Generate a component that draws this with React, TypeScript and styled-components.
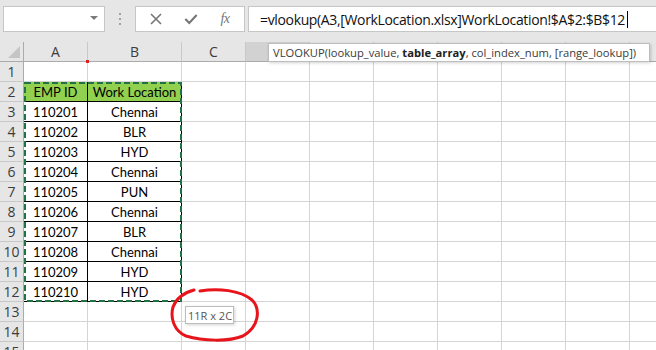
import React from 'react'
import styled, { createGlobalStyle } from 'styled-components'

const GlobalStyle = createGlobalStyle`
  html, body {
    margin: 0;
    padding: 0;
    background: #ffffff;
    overflow: hidden;
  }
  * {
    box-sizing: border-box;
  }
`

const uiFont = `"Open Sans", "Noto Sans", sans-serif`
const cellFont = `Lato, "Noto Sans", sans-serif`

// letters of D onwards sit under the syntax tooltip, so they are not drawn
const columns = [
  { key: 'A', width: 64, label: 'A' },
  { key: 'B', width: 94, label: 'B' },
  { key: 'C', width: 64, label: 'C' },
  { key: 'D', width: 64, label: '', hot: true },
  { key: 'E', width: 64, label: '' },
  { key: 'F', width: 64, label: '' },
  { key: 'G', width: 64, label: '' },
  { key: 'H', width: 64, label: '' },
  { key: 'I', width: 64, label: '' },
  { key: 'J', width: 64, label: '' },
]

const data = [
  ['110201', 'Chennai'],
  ['110202', 'BLR'],
  ['110203', 'HYD'],
  ['110204', 'Chennai'],
  ['110205', 'PUN'],
  ['110206', 'Chennai'],
  ['110207', 'BLR'],
  ['110208', 'Chennai'],
  ['110209', 'HYD'],
  ['110210', 'HYD'],
]

const Page = styled.div`
  position: relative;
  width: 656px;
  height: 350px;
  overflow: hidden;
  background: #ffffff;
`

const FormulaBar = styled.div`
  height: 42px;
  background: #e6e6e6;
  display: flex;
  align-items: flex-start;
  padding-top: 6px;
  padding-left: 3px;
`

const NameBox = styled.div`
  width: 102px;
  height: 26px;
  background: #ffffff;
  border: 1px solid #c6c6c6;
  display: flex;
  align-items: center;
  justify-content: flex-end;
  padding-right: 6px;
`

const Caret = styled.div`
  width: 0;
  height: 0;
  border-left: 4px solid transparent;
  border-right: 4px solid transparent;
  border-top: 4px solid #7a7a7a;
  margin-top: -2px;
`

const Grip = styled.div`
  width: 30px;
  height: 26px;
  display: flex;
  flex-direction: column;
  align-items: center;
  justify-content: center;
  gap: 3px;
`

const GripDot = styled.span`
  width: 2px;
  height: 2px;
  background: #a0a0a0;
`

const ButtonGroup = styled.div`
  width: 110px;
  height: 26px;
  background: #ffffff;
  border: 1px solid #c6c6c6;
  display: flex;
  align-items: center;
  justify-content: space-between;
  padding: 0 12px 0 13px;
`

const IconButton = styled.span`
  width: 14px;
  height: 14px;
  display: flex;
  align-items: center;
  justify-content: center;
  color: #767676;
`

const Fx = styled.span`
  font-family: "Liberation Serif", "DejaVu Serif", serif;
  font-style: italic;
  font-size: 14px;
  color: #767676;
  letter-spacing: -0.5px;
  line-height: 1;
`

const FormulaInput = styled.div`
  flex: 1;
  margin-left: 3px;
  margin-right: -4px;
  height: 26px;
  background: #ffffff;
  border: 1px solid #c6c6c6;
  display: flex;
  align-items: center;
  padding-left: 11px;
  font-family: ${uiFont};
  font-size: 14px;
  letter-spacing: -0.35px;
  color: #111111;
  white-space: nowrap;
`

const TextCursor = styled.span`
  display: inline-block;
  width: 1px;
  height: 17px;
  background: #000000;
  margin-left: 2px;
`

const Sheet = styled.div`
  display: flex;
  flex-direction: column;
`

const Row = styled.div`
  display: flex;
  height: 20px;
`

const Corner = styled.div`
  position: relative;
  width: 24px;
  flex-shrink: 0;
  height: 20px;
  background: #e6e6e6;
  border-right: 1px solid #ababab;
  border-bottom: 1px solid #ababab;
  overflow: hidden;

  &::after {
    content: '';
    position: absolute;
    right: 3px;
    bottom: 3px;
    width: 0;
    height: 0;
    border-left: 12px solid transparent;
    border-bottom: 12px solid #c5c5c5;
  }
`

const ColHeader = styled.div<{ $w: number; $hot?: boolean }>`
  width: ${(p) => p.$w}px;
  flex-shrink: 0;
  height: 20px;
  background: ${(p) => (p.$hot ? '#d2d2d2' : '#e6e6e6')};
  border-right: 1px solid #c8c8c8;
  border-bottom: 1px solid #ababab;
  display: flex;
  align-items: center;
  justify-content: center;
  font-family: ${uiFont};
  font-size: 14px;
  color: #3c3c3c;
`

const RowHeader = styled.div`
  width: 24px;
  flex-shrink: 0;
  height: 20px;
  background: #e6e6e6;
  border-right: 1px solid #ababab;
  border-bottom: 1px solid #c8c8c8;
  display: flex;
  align-items: center;
  justify-content: center;
  font-family: ${uiFont};
  font-size: 14px;
  color: #3c3c3c;
`

const Cell = styled.div<{ $w: number; $table?: boolean; $head?: boolean }>`
  width: ${(p) => p.$w}px;
  flex-shrink: 0;
  height: 20px;
  background: ${(p) => (p.$head ? '#92d050' : '#ffffff')};
  border-right: 1px solid ${(p) => (p.$table ? '#000000' : '#d4d4d4')};
  border-bottom: 1px solid ${(p) => (p.$table ? '#000000' : '#d4d4d4')};
  display: flex;
  align-items: center;
  justify-content: center;
  font-family: ${cellFont};
  font-size: 13px;
  color: #000000;
  white-space: nowrap;
`

const Selection = styled.svg`
  position: absolute;
  left: 24px;
  top: 82px;
  pointer-events: none;
`

const Tip = styled.div`
  position: absolute;
  background: #ffffff;
  border: 1px solid #bdbdbd;
  box-shadow: 1px 1px 3px rgba(0, 0, 0, 0.18);
  font-family: ${uiFont};
  white-space: nowrap;
  display: flex;
  align-items: center;
`

const SyntaxTip = styled(Tip)`
  left: 268px;
  top: 43px;
  width: 382px;
  height: 19px;
  padding-left: 4px;
  font-size: 11.2px;
  color: #3a3a3a;

  b {
    font-weight: 700;
    color: #222222;
  }
`

const SizeTip = styled(Tip)`
  left: 185px;
  top: 306px;
  width: 49px;
  height: 18px;
  padding-left: 2px;
  font-size: 11px;
  color: #555555;
`

const Scribble = styled.svg`
  position: absolute;
  left: 0;
  top: 0;
  pointer-events: none;
`

const RedTick = styled.span`
  position: absolute;
  left: 86px;
  top: 60px;
  width: 3px;
  height: 3px;
  background: #e02020;
`

function CloseIcon() {
  return (
    <svg width="14" height="14" viewBox="0 0 14 14">
      <path d="M2 2 L12 12 M12 2 L2 12" stroke="currentColor" strokeWidth="1.6" />
    </svg>
  )
}

function CheckIcon() {
  return (
    <svg width="16" height="14" viewBox="0 0 16 14">
      <path d="M1.5 7 L6 11.5 L14.5 2.5" stroke="currentColor" strokeWidth="2.4" fill="none" />
    </svg>
  )
}

export default function App() {
  const totalRows = 15

  const renderRow = (r: number) => {
    const inTable = r >= 2 && r <= 12
    return (
      <Row key={r}>
        <RowHeader>{r}</RowHeader>
        {columns.map((c, ci) => {
          const tableCol = inTable && ci < 2
          let text = ''
          if (r === 2 && ci === 0) text = 'EMP ID'
          if (r === 2 && ci === 1) text = 'Work Location'
          if (r >= 3 && r <= 12 && ci < 2) text = data[r - 3][ci]
          return (
            <Cell key={c.key} $w={c.width} $table={tableCol} $head={r === 2 && ci < 2}>
              {text}
            </Cell>
          )
        })}
      </Row>
    )
  }

  return (
    <Page>
      <GlobalStyle />
      <FormulaBar>
        <NameBox>
          <Caret />
        </NameBox>
        <Grip>
          <GripDot />
          <GripDot />
          <GripDot />
        </Grip>
        <ButtonGroup>
          <IconButton>
            <CloseIcon />
          </IconButton>
          <IconButton>
            <CheckIcon />
          </IconButton>
          <IconButton>
            <Fx>fx</Fx>
          </IconButton>
        </ButtonGroup>
        <FormulaInput>
          =vlookup(A3,[WorkLocation.xlsx]WorkLocation!$A$2:$B$12
          <TextCursor />
        </FormulaInput>
      </FormulaBar>

      <Sheet>
        <Row>
          <Corner />
          {columns.map((c) => (
            <ColHeader key={c.key} $w={c.width} $hot={c.hot}>
              {c.label}
            </ColHeader>
          ))}
        </Row>
        {Array.from({ length: totalRows }, (_, i) => renderRow(i + 1))}
      </Sheet>

      <RedTick />

      <Selection width="158" height="220" viewBox="0 0 158 220">
        <rect
          x="1"
          y="1"
          width="156"
          height="218"
          fill="none"
          stroke="#217346"
          strokeWidth="2"
          strokeDasharray="6 3"
        />
      </Selection>

      <SyntaxTip>
        VLOOKUP(lookup_value,&nbsp;<b>table_array</b>, col_index_num, [range_lookup])
      </SyntaxTip>

      <SizeTip>11R x 2C</SizeTip>

      <Scribble width="656" height="350" viewBox="0 0 656 350">
        <path
          d="M200 291 C 218 288, 240 290, 252 300 C 261 309, 259 327, 243 336 C 228 342, 203 341, 186 336 C 174 331, 170 318, 173 307 C 176 299, 183 293, 194 290"
          fill="none"
          stroke="#e8141c"
          strokeWidth="3"
          strokeLinecap="round"
        />
      </Scribble>
    </Page>
  )
}
